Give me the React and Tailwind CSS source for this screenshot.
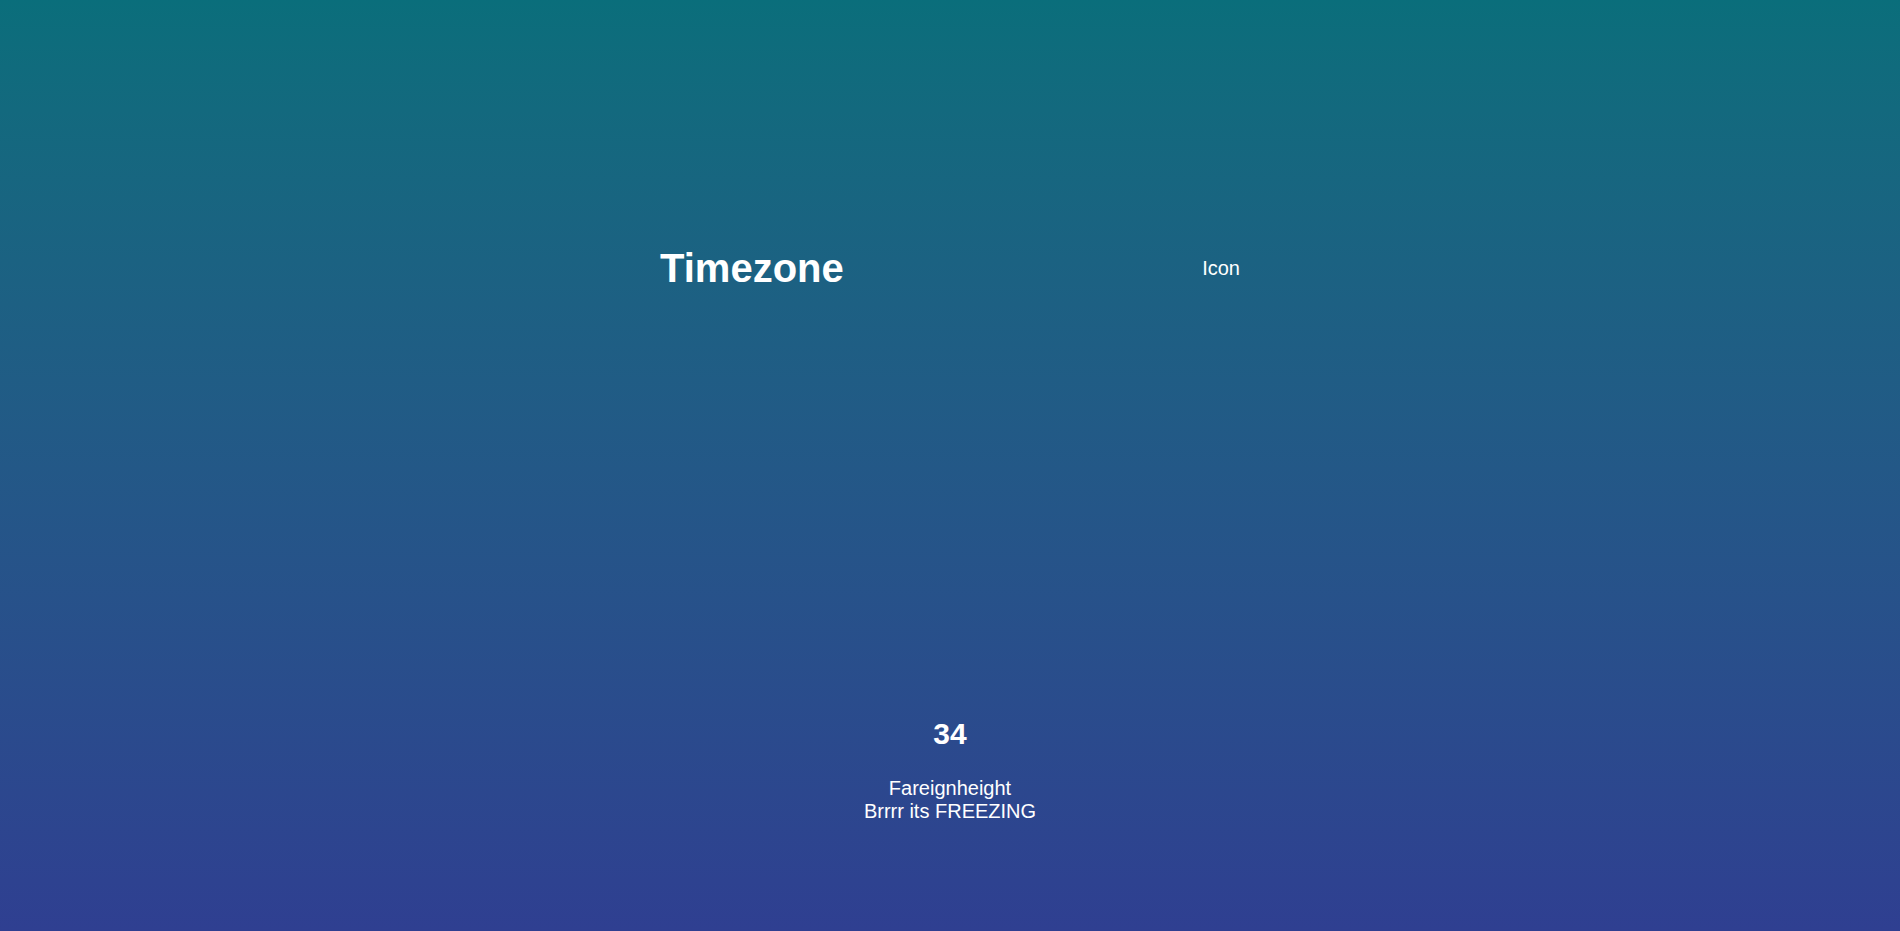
import React from "react";

const App = () => {
  return (
    <div className="flex h-screen flex-col bg-gradient-to-b from-[#0a6e7b] to-[#2f3f91] font-['Liberation_Sans',Arial,sans-serif] text-white">
      <div className="mx-auto mt-[245px] flex w-[580px] items-center justify-between">
        <h1 className="text-[40px] font-bold leading-[46px]">Timezone</h1>
        <div className="text-[20px] leading-[23px]">Icon</div>
      </div>

      <div className="mt-[426px] flex flex-col items-center text-center">
        <h2 className="text-[30px] font-bold leading-[34.5px]">34</h2>
        <span className="mt-[25px] text-[20px] leading-[23px]">Fareignheight</span>
        <div className="text-[20px] leading-[23px]">Brrrr its FREEZING</div>
      </div>
    </div>
  );
};

export default App;
